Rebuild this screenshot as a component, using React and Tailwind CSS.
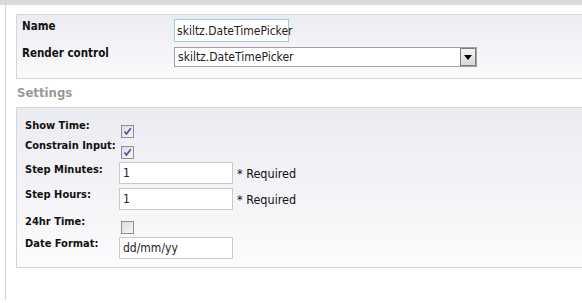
import React from "react";

const Check = ({ checked }) => (
  <span className="inline-flex h-[13px] w-[13px] items-center justify-center border border-[#8e8f8f] bg-gradient-to-br from-[#dcdcdc] to-[#f6f6f6]">
    {checked && (
      <svg width="9" height="9" viewBox="0 0 9 9">
        <path d="M1.5 4.5 L3.5 7 L7.8 1.2" fill="none" stroke="#3c52a8" strokeWidth="1.6" />
      </svg>
    )}
  </span>
);

const TextBox = ({ value }) => (
  <div className="flex h-[22px] w-[114px] items-center border border-[#c9c9c9] bg-white px-[3px] text-[12px] text-[#222]">
    {value}
  </div>
);

const SETTINGS = [
  { label: "Show Time:", type: "check", checked: true, h: "h-[21px]", lp: "pt-[2px]" },
  { label: "Constrain Input:", type: "check", checked: true, h: "h-[24px]", lp: "pt-[1px]" },
  { label: "Step Minutes:", type: "text", value: "1", req: true, h: "h-[26px]", lp: "pt-[1px]" },
  { label: "Step Hours:", type: "text", value: "1", req: true, h: "h-[27px]", lp: "pt-0" },
  { label: "24hr Time:", type: "check", checked: false, h: "h-[22px]", lp: "pt-0" },
  { label: "Date Format:", type: "text", value: "dd/mm/yy", h: "h-[22px]", lp: "pt-0" },
];

export default function App() {
  return (
    <div className="h-[303px] w-[582px] overflow-hidden bg-white font-['DejaVu_Sans_Condensed','DejaVu_Sans',sans-serif] text-[#111]">
      <div className="h-[5px] bg-[#dadada]" />
      <div className="ml-[5px] h-[295px] border-l border-[#cfcfcf] pl-[10px] pt-[9px]">
        {/* general */}
        <div className="border-y border-l border-[#d6d6d6] bg-gradient-to-b from-[#ebebf2] to-[#fbfbfd] pb-[11px] pl-[5px] pt-[4px]">
          <div className="flex h-[28px]">
            <div className="w-[152px] text-[11.5px] font-bold leading-[14px]">Name</div>
            <div className="flex h-[23px] w-[115px] items-center whitespace-nowrap border border-[#a6c9e2] bg-white pl-[2px] text-[12px] text-[#222]">
              skiltz.DateTimePicker
            </div>
          </div>
          <div className="flex">
            <div className="w-[152px] text-[11.5px] font-bold leading-[12px]">Render control</div>
            <div className="flex h-[20px] w-[303px] items-center border border-[#a0a0a0] bg-white pl-[3px] text-[12px] text-[#222]">
              <span className="flex-1">skiltz.DateTimePicker</span>
              <span className="flex h-[18px] w-[16px] items-center justify-center border border-[#7d7d7d] bg-gradient-to-b from-[#f4f4f4] to-[#d8d8d8]">
                <svg width="8" height="5" viewBox="0 0 8 5">
                  <path d="M0 0 H8 L4 5 Z" fill="#000" />
                </svg>
              </span>
            </div>
          </div>
        </div>

        <div className="pl-px pt-[6px] text-[13px] font-bold leading-[16px] text-[#999]">Settings</div>

        <div className="mt-[6px] border-y border-l border-[#d6d6d6] bg-gradient-to-b from-[#ebebf2] to-[#fcfcfd] pb-[8px] pl-[8px] pt-[9px]">
          {SETTINGS.map((s) => (
            <div key={s.label} className={`flex ${s.h}`}>
              <div className={`w-[94px] whitespace-nowrap text-[11px] font-bold leading-[14px] ${s.lp}`}>{s.label}</div>
              {s.type === "check" ? (
                <div className="pl-[2px] pt-[2px]">
                  <Check checked={s.checked} />
                </div>
              ) : (
                <div className="flex items-start">
                  <TextBox value={s.value} />
                  {s.req && <span className="ml-[4px] pt-[3px] text-[12.5px]">* Required</span>}
                </div>
              )}
            </div>
          ))}
        </div>
      </div>
    </div>
  );
}
